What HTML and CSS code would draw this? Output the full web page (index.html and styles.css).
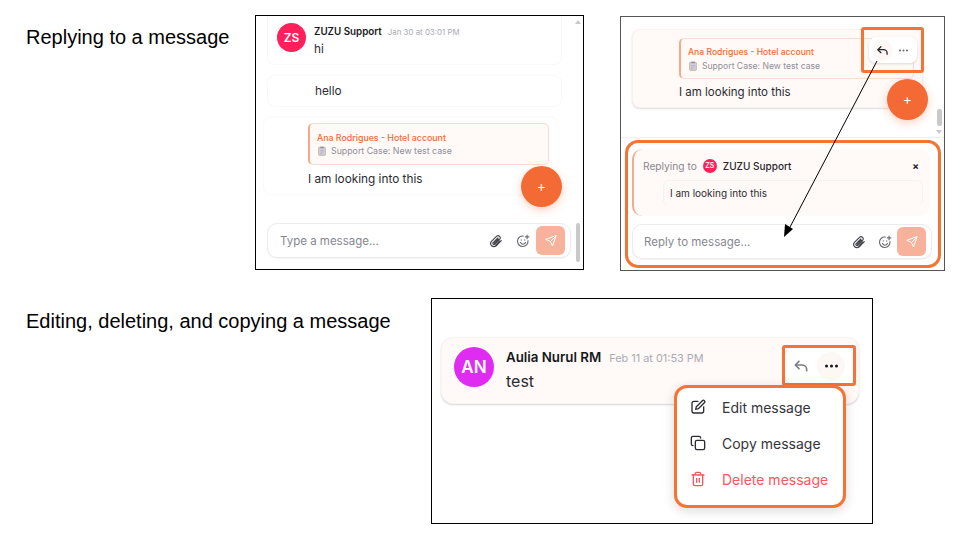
FILE: index.html
```html
<!DOCTYPE html>
<html lang="en">
<head>
  <meta charset="UTF-8" />
  <meta name="viewport" content="width=device-width, initial-scale=1.0"/>
  <title>Message actions</title>
  <link rel="stylesheet" href="styles.css">
</head>
<body>

  <svg class="icon-defs" width="0" height="0">
    <defs>
      <symbol id="i-clip" viewBox="0 0 24 24"><path d="M21 11.5l-8.600 8.600a5.500 5.500 0 0 1-7.800-7.800l8.600-8.600a3.700 3.700 0 0 1 5.200 5.200l-8.600 8.600a1.800 1.800 0 0 1-2.600-2.600l8-8M18.500 12l-7 7M16 9l-7 7"/></symbol>
      <symbol id="i-smile" viewBox="0 0 24 24"><path d="M20.500 11.500a9 9 0 1 1-8-8"/><path d="M7.800 14.500c1 2 2.600 3 4.200 3s3.200-1 4.200-3"/><path d="M9 10v.4M15 10v.4"/><path d="M19 2v6M16 5h6"/></symbol>
      <symbol id="i-send" viewBox="0 0 24 24"><path d="M22 2L15 22l-4-9-9-4z"/><path d="M22 2L11 13"/></symbol>
      <symbol id="i-reply" viewBox="0 0 24 24"><path d="M9 5L3.500 10.500 9 16"/><path d="M4 10.500h10a6.500 6.500 0 0 1 6.500 6.500v2"/></symbol>
      <symbol id="i-dots" viewBox="0 0 13 4"><circle cx="1.500" cy="2" r="1.500"/><circle cx="6.500" cy="2" r="1.500"/><circle cx="11.500" cy="2" r="1.500"/></symbol>
      <symbol id="i-edit" viewBox="0 0 24 24"><path d="M12 3.500H6a3 3 0 0 0-3 3V18a3 3 0 0 0 3 3h11.500a3 3 0 0 0 3-3v-6"/><path d="M18.500 2.500a2.100 2.100 0 0 1 3 3L12.500 14.500 8.500 15.500l1-4z"/></symbol>
      <symbol id="i-copy" viewBox="0 0 24 24"><rect x="8" y="8" width="14" height="14" rx="2.500"/><path d="M4.500 16A2.500 2.500 0 0 1 2 13.500v-9A2.500 2.500 0 0 1 4.500 2h9A2.500 2.500 0 0 1 16 4.500"/></symbol>
      <symbol id="i-trash" viewBox="0 0 24 24"><path d="M3 6h18M8 6V4a2 2 0 0 1 2-2h4a2 2 0 0 1 2 2v2"/><path d="M19 6v14a2 2 0 0 1-2 2H7a2 2 0 0 1-2-2V6"/><path d="M10 11v6M14 11v6"/></symbol>
      <symbol id="i-case" viewBox="0 0 12 14"><rect x="1" y="1.500" width="10" height="12" rx="1" fill="#d3d4e0" stroke="#c09a80"/><rect x="3.500" y="0.500" width="5" height="2.500" fill="#8a8f9e" stroke="none"/><path d="M3 6h6M3 8.500h6M3 11h4" stroke="#a9a6b4"/></symbol>
    </defs>
  </svg>

  <div class="row row-top">
    <div class="slide-label label-top">Replying to a message</div>

    <div class="panel panel-one">
      <div class="card card-first">
        <div class="avatar avatar-zs">ZS</div>
        <div class="card-body">
          <div class="meta"><span class="name">ZUZU Support</span><span class="time">Jan 30 at 03:01 PM</span></div>
          <div class="text">hi</div>
        </div>
      </div>
      <div class="card card-hello"><div class="text">hello</div></div>
      <div class="card card-reply">
        <div class="quote">
          <div class="quote-title">Ana Rodrigues - Hotel account</div>
          <div class="quote-sub"><svg class="case-icon"><use href="#i-case"/></svg>Support Case: New test case</div>
        </div>
        <div class="text">I am looking into this</div>
      </div>
      <div class="input-box input-one">
        <span class="placeholder">Type a message...</span>
        <svg class="tool clip"><use href="#i-clip"/></svg>
        <svg class="tool smile"><use href="#i-smile"/></svg>
        <span class="send-btn"><svg class="send-icon"><use href="#i-send"/></svg></span>
      </div>
      <div class="fab fab-one">+</div>
      <div class="scroll-up"></div>
      <div class="scroll-thumb thumb-one"></div>
    </div>

    <div class="panel panel-two">
      <div class="card card-active">
        <div class="quote">
          <div class="quote-title">Ana Rodrigues - Hotel account</div>
          <div class="quote-sub"><svg class="case-icon"><use href="#i-case"/></svg>Support Case: New test case</div>
        </div>
        <div class="text">I am looking into this</div>
      </div>
      <div class="composer">
        <div class="reply-box">
          <div class="reply-head">
            <span class="reply-label">Replying to</span>
            <span class="avatar avatar-small">ZS</span>
            <span class="reply-name">ZUZU Support</span>
            <span class="reply-close">×</span>
          </div>
          <div class="reply-quote">I am looking into this</div>
        </div>
        <div class="input-box input-two">
          <span class="placeholder">Reply to message...</span>
          <svg class="tool clip"><use href="#i-clip"/></svg>
          <svg class="tool smile"><use href="#i-smile"/></svg>
          <span class="send-btn"><svg class="send-icon"><use href="#i-send"/></svg></span>
        </div>
      </div>
      <div class="actions actions-two">
        <span class="action-btn action-on"><svg class="action-icon"><use href="#i-reply"/></svg></span>
        <span class="action-btn"><svg class="dots-icon"><use href="#i-dots"/></svg></span>
      </div>
      <div class="mark mark-actions"></div>
      <div class="mark mark-composer"></div>
      <div class="fab fab-two">+</div>
      <div class="scroll-thumb thumb-two"></div>
      <div class="scroll-down"></div>
      <svg class="pointer" width="323" height="253">
        <line x1="256" y1="44" x2="168" y2="212"/>
        <polygon points="163,220 164,207 172,212"/>
      </svg>
    </div>
  </div>

  <div class="row row-bottom">
    <div class="slide-label label-bottom">Editing, deleting, and copying a message</div>

    <div class="panel panel-three">
      <div class="card card-big">
        <div class="avatar avatar-an">AN</div>
        <div class="card-body">
          <div class="meta"><span class="name name-big">Aulia Nurul RM</span><span class="time time-big">Feb 11 at 01:53 PM</span></div>
          <div class="text text-big">test</div>
        </div>
      </div>
      <div class="actions actions-three">
        <span class="action-btn"><svg class="action-icon reply-grey"><use href="#i-reply"/></svg></span>
        <span class="action-btn action-on"><svg class="dots-icon dots-big"><use href="#i-dots"/></svg></span>
      </div>
      <div class="mark mark-three"></div>
      <div class="menu">
        <div class="menu-item"><svg class="menu-icon"><use href="#i-edit"/></svg>Edit message</div>
        <div class="menu-item"><svg class="menu-icon"><use href="#i-copy"/></svg>Copy message</div>
        <div class="menu-item menu-delete"><svg class="menu-icon"><use href="#i-trash"/></svg>Delete message</div>
      </div>
    </div>
  </div>

</body>
</html>
```

FILE: styles.css
```css
* {
  box-sizing: border-box;
}
body {
  margin: 0;
  width: 960px;
  height: 540px;
  overflow: hidden;
  background: #fff;
  font-family: Inter, 'Noto Sans', sans-serif;
  color: #1f2024;
}

.icon-defs {
  position: absolute;
}

.row {
  display: flex;
  align-items: flex-start;
}
.row-top {
  padding-top: 15px;
}
.row-bottom {
  padding-top: 27px;
}

.slide-label {
  font-family: 'Liberation Sans', Arial, sans-serif;
  font-size: 20px;
  line-height: 24px;
  color: #000;
  margin-left: 26px;
}
.label-top {
  width: 229px;
  margin-top: 10px;
}
.label-bottom {
  width: 405px;
  margin-top: 11px;
}

.panel {
  position: relative;
  flex: none;
  overflow: hidden;
  background: #fff;
  border: 1px solid #000;
}
.panel-one {
  width: 329px;
  height: 255px;
  margin-right: 36px;
}
.panel-two {
  width: 325px;
  height: 255px;
  margin-top: 1px;
  border-color: #555;
}
.panel-three {
  width: 442px;
  height: 226px;
}

/* message cards */
.card {
  display: flex;
  width: 295px;
  margin-left: 11px;
  border: 1px solid #f9f8f8;
  border-radius: 8px;
  background: #fff;
}
.card-first {
  height: 49px;
  padding: 7px 9px;
  gap: 8px;
  border-top: 0;
  border-radius: 0 0 8px 8px;
}
.card-hello {
  height: 32px;
  margin-top: 10px;
  padding-left: 47px;
  align-items: center;
}
.card-reply {
  flex-direction: column;
  height: 79px;
  margin-top: 9px;
  margin-left: 7px;
  padding: 6px 8px 0 44px;
  border-color: #fafafa;
}
.card-active {
  flex-direction: column;
  width: 291px;
  height: 79px;
  margin-top: 12px;
  padding: 8px 9px 0 46px;
  background: #fff9f7;
  border-color: #f8f1ef;
  box-shadow: 0 1px 2px rgba(0, 0, 0, 0.14);
}
.card-big {
  width: 418px;
  height: 67px;
  margin-top: 38px;
  margin-left: 9px;
  padding: 9px 12px;
  gap: 12px;
  background: #fff9f8;
  border-color: #f9f3f2;
  border-radius: 12px;
  box-shadow: 0 1px 2px rgba(0, 0, 0, 0.16);
}

.avatar {
  display: flex;
  flex: none;
  align-items: center;
  justify-content: center;
  border-radius: 50%;
  color: #fff;
  font-weight: 600;
}
.avatar-zs {
  width: 29px;
  height: 29px;
  font-size: 12px;
  background: #ff1f5a;
}
.avatar-small {
  width: 14px;
  height: 14px;
  font-size: 7px;
  background: #ff1f5a;
}
.avatar-an {
  width: 40px;
  height: 40px;
  font-size: 17px;
  background: #e02cf2;
}

.card-body {
  min-width: 0;
  padding-top: 1px;
}
.card-big .card-body {
  padding-top: 2px;
}
.meta {
  display: flex;
  align-items: baseline;
  gap: 6px;
  height: 16px;
  line-height: 16px;
}
.name {
  font-size: 9.800px;
  font-weight: 600;
  color: #17181c;
}
.time {
  font-size: 7.900px;
  color: #a9abb2;
}
.name-big {
  font-size: 13.300px;
}
.time-big {
  font-size: 10.900px;
  margin-left: 2px;
}
.text {
  font-size: 11.800px;
  line-height: 18px;
  color: #2a2b30;
}
.text-big {
  font-size: 16px;
  line-height: 24px;
  margin-top: 4px;
}

.quote {
  width: 241px;
  height: 42px;
  padding: 7px 7px;
  margin-bottom: 5px;
  background: #fff9f7;
  border: 1px solid #fbdcd0;
  border-left: 2px solid #f8a98a;
  border-radius: 5px;
}
.card-active .quote {
  width: 235px;
  height: 41px;
  margin-bottom: 4px;
}
.card-active .quote-title,
.card-active .quote-sub {
  font-size: 8.600px;
}
.card-active .text {
  font-size: 11.500px;
}
.quote-title {
  font-size: 8.800px;
  line-height: 13px;
  font-weight: 500;
  color: #f4693a;
}
.quote-sub {
  display: flex;
  align-items: center;
  gap: 5px;
  font-size: 8.800px;
  line-height: 14px;
  color: #8d8f99;
}
.case-icon {
  width: 8px;
  height: 10px;
  margin-left: 1px;
}

/* input */
.input-box {
  display: flex;
  align-items: center;
  height: 35px;
  padding-left: 12px;
  border: 1px solid #ecebee;
  border-radius: 10px;
  background: #fff;
  box-shadow: 0 1px 1px rgba(0, 0, 0, 0.05);
}
.input-one {
  width: 304px;
  margin-top: 28px;
  margin-left: 11px;
  padding-right: 5px;
}
.input-two {
  width: 300px;
  margin-top: 8px;
  padding-left: 11px;
  padding-right: 5px;
}
.placeholder {
  flex: 1;
  font-size: 11.500px;
  color: #85878f;
}
.tool {
  width: 14px;
  height: 14px;
  fill: none;
  stroke: #45464c;
  stroke-width: 2;
  stroke-linecap: round;
  stroke-linejoin: round;
}
.clip {
  margin-right: 13px;
}
.smile {
  margin-right: 6px;
  stroke: #6b6c72;
}
.input-two .clip {
  margin-right: 12px;
}
.input-two .smile {
  margin-right: 5px;
}
.send-btn {
  display: flex;
  align-items: center;
  justify-content: center;
  width: 29px;
  height: 29px;
  border-radius: 6px;
  background: #f8b29c;
}
.send-icon {
  width: 12px;
  height: 12px;
  fill: none;
  stroke: #fff;
  stroke-width: 2;
  stroke-linejoin: round;
  stroke-linecap: round;
}

/* reply composer */
.composer {
  width: 323px;
  height: 133px;
  margin-top: 29px;
  padding: 11px 0 0 11px;
  border-top: 1px solid #f1f0f0;
}
.reply-box {
  width: 298px;
  height: 67px;
  padding: 8px 7px 0 9px;
  background: #fff9f8;
  border-left: 2px solid #f8a98a;
  border-radius: 10px;
}
.reply-head {
  display: flex;
  align-items: center;
  height: 17px;
  font-size: 10.200px;
}
.reply-label {
  color: #85878f;
  margin-right: 6px;
}
.reply-name {
  flex: 1;
  margin-left: 6px;
  font-size: 10px;
  font-weight: 500;
  color: #27282d;
}
.reply-close {
  margin-right: 4px;
  font-size: 10px;
  font-weight: 700;
}
.reply-quote {
  width: 260px;
  height: 26px;
  margin-top: 6px;
  margin-left: 20px;
  padding-left: 6px;
  font-size: 10px;
  line-height: 24px;
  color: #2a2b30;
  border: 1px solid #f8f1ef;
  border-bottom: 0;
  border-radius: 6px;
}

/* things on top of the chat */
.fab {
  position: absolute;
  width: 41px;
  height: 41px;
  border-radius: 50%;
  background: #f36a35;
  color: #fff;
  font-size: 14px;
  line-height: 40px;
  text-align: center;
  box-shadow: 0 3px 8px rgba(243, 106, 53, 0.3);
}
.fab-one {
  left: 265px;
  top: 150px;
}
.fab-two {
  left: 266px;
  top: 62px;
}

.scroll-thumb {
  position: absolute;
  background: #c9c9c9;
  border-radius: 2px;
}
.thumb-one {
  left: 320px;
  top: 207px;
  width: 4px;
  height: 39px;
}
.thumb-two {
  left: 316px;
  top: 92px;
  width: 5px;
  height: 17px;
}
.scroll-up,
.scroll-down {
  position: absolute;
  width: 0;
  height: 0;
  border: 3px solid transparent;
}
.scroll-up {
  left: 319px;
  top: 1px;
  border-bottom: 4px solid #c9c9c9;
}
.scroll-down {
  left: 315px;
  top: 113px;
  border-top: 4px solid #c9c9c9;
}

.actions {
  position: absolute;
  display: flex;
  align-items: center;
  background: #fff;
  box-shadow: 0 1px 3px rgba(0, 0, 0, 0.14);
}
.actions-two {
  left: 248px;
  top: 20px;
  width: 48px;
  height: 26px;
  padding: 0 3px;
  justify-content: space-between;
  border-radius: 7px;
}
.actions-three {
  left: 353px;
  top: 49px;
  width: 70px;
  height: 36px;
  padding: 0 2px;
  gap: 2px;
  border-radius: 8px;
}
.action-btn {
  display: flex;
  align-items: center;
  justify-content: center;
  width: 21px;
  height: 21px;
  border-radius: 50%;
}
.action-on {
  background: #fdf7f5;
}
.action-icon {
  width: 13px;
  height: 13px;
  fill: none;
  stroke: #26272b;
  stroke-width: 2.400;
  stroke-linecap: round;
  stroke-linejoin: round;
}
.actions-three .action-btn {
  width: 28px;
  height: 28px;
}
.action-icon.reply-grey {
  width: 16px;
  height: 16px;
  stroke: #7b7c83;
}
.dots-icon {
  width: 9px;
  height: 3px;
  fill: #6a6b72;
}
.dots-icon.dots-big {
  width: 13px;
  height: 4px;
  fill: #17181c;
}

.mark {
  position: absolute;
  border: 3px solid #f47335;
  border-radius: 3px;
}
.mark-actions {
  left: 240px;
  top: 10px;
  width: 63px;
  height: 46px;
}
.mark-composer {
  left: 4px;
  top: 123px;
  width: 316px;
  height: 128px;
  border-radius: 13px;
}
.mark-three {
  left: 350px;
  top: 46px;
  width: 74px;
  height: 41px;
}

.pointer {
  position: absolute;
  left: 0;
  top: 0;
}
.pointer line {
  stroke: #000;
  stroke-width: 1;
}
.pointer polygon {
  fill: #000;
}

.menu {
  position: absolute;
  left: 242px;
  top: 86px;
  display: flex;
  flex-direction: column;
  width: 172px;
  height: 123px;
  padding: 1px 0 0 13px;
  background: #fff;
  border: 3px solid #f47335;
  border-radius: 13px;
  box-shadow: 0 3px 12px rgba(0, 0, 0, 0.14);
}
.menu-item {
  display: flex;
  align-items: center;
  gap: 16px;
  height: 36px;
  font-size: 14px;
  color: #33343a;
}
.menu-icon {
  width: 16px;
  height: 16px;
  fill: none;
  stroke: #2b2c31;
  stroke-width: 2;
  stroke-linecap: round;
  stroke-linejoin: round;
}
.menu-delete {
  color: #f9565f;
}
.menu-delete .menu-icon {
  stroke: #f9565f;
}
```
